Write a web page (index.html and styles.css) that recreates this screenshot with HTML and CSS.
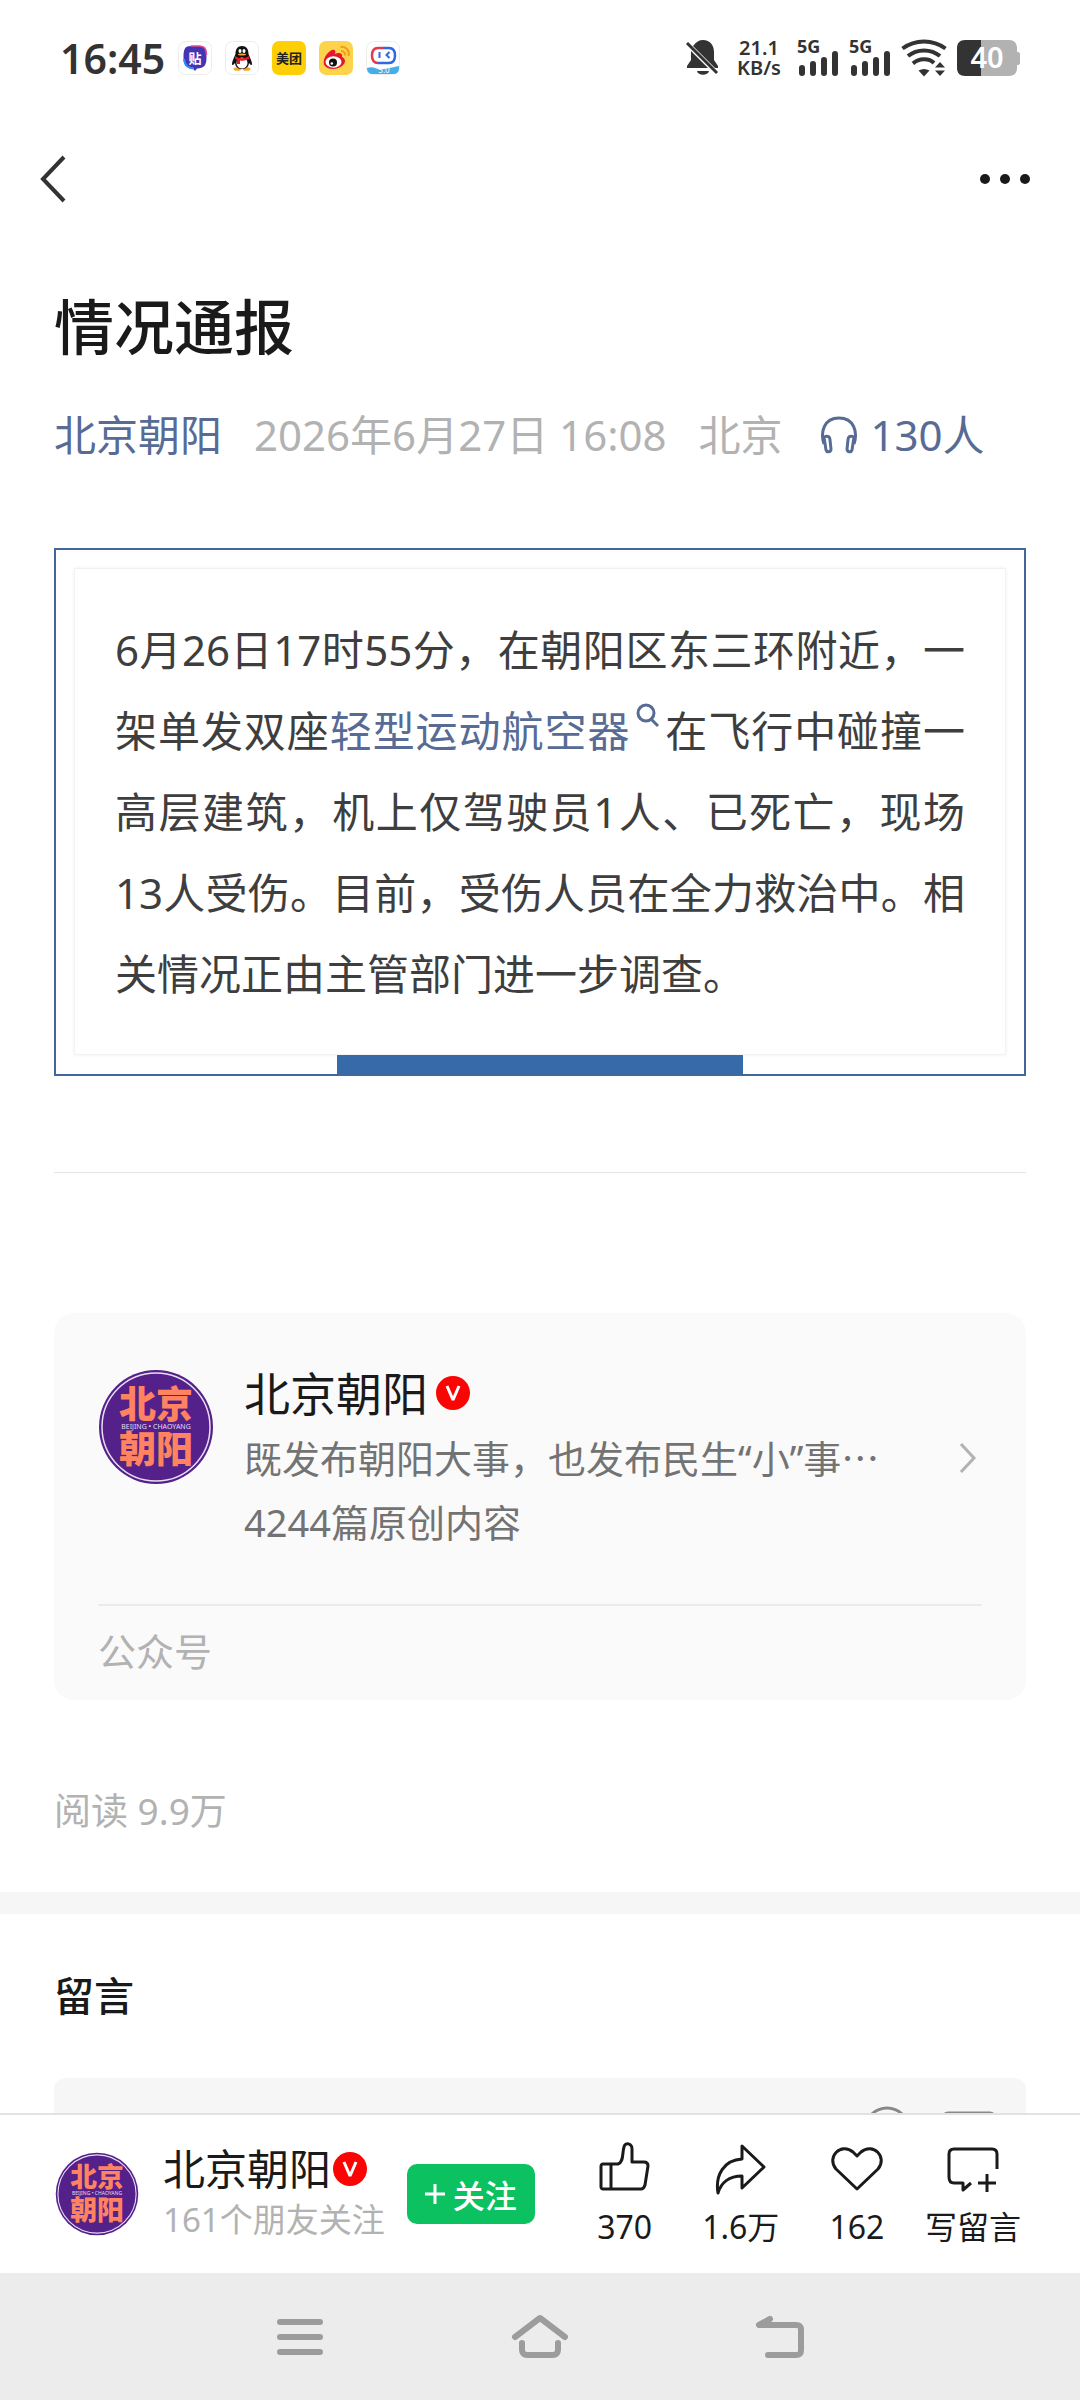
FILE: index.html
```html
<!DOCTYPE html>
<html lang="zh-CN">
<head>
  <meta charset="UTF-8">
  <meta name="viewport" content="width=device-width, initial-scale=1.0">
  <title>情况通报</title>
  <link rel="stylesheet" href="styles.css">
</head>
<body>
  <header class="status-bar">
    <div class="status-left">
      <span class="time">16:45</span>
      <svg class="app" viewBox="0 0 34 34">
        <rect x="0.5" y="0.5" width="33" height="33" rx="7" fill="#fff" stroke="#ececec"/>
        <path d="M13 5H21C27 5 28.5 8 28.5 16C28.5 25 26 27 19 27.5L17 30L15 27.5C8 27 5.5 24 5.5 16C5.5 8 7 5 13 5Z" fill="#4434b4"/>
        <path d="M13 5H21C27 5 28.5 8 28.5 14" fill="none" stroke="#e0508c" stroke-width="1.5"/>
        <path d="M6 18C7 25 10 27 16 27.5" fill="none" stroke="#2f8cf0" stroke-width="2"/>
        <text x="17" y="22" class="app-text white">贴</text>
      </svg>
      <svg class="app" viewBox="0 0 34 34">
        <rect x="0.5" y="0.5" width="33" height="33" rx="7" fill="#fff" stroke="#ececec"/>
        <ellipse cx="12.5" cy="28" rx="4" ry="1.8" fill="#f5a623"/>
        <ellipse cx="21.5" cy="28" rx="4" ry="1.8" fill="#f5a623"/>
        <path d="M17 5C12.5 5 10.5 8 10.5 13C9 17 7 20 7 23C7 25 8.5 24 10 22C10.5 26 13 28 17 28C21 28 23.5 26 24 22C25.5 24 27 25 27 23C27 20 25 17 23.5 13C23.5 8 21.5 5 17 5Z" fill="#111"/>
        <ellipse cx="17" cy="22" rx="5.5" ry="5.5" fill="#fff"/>
        <ellipse cx="15" cy="10" rx="1.5" ry="2" fill="#fff"/>
        <ellipse cx="19" cy="10" rx="1.5" ry="2" fill="#fff"/>
        <ellipse cx="17" cy="13.5" rx="4" ry="1" fill="#f5a623"/>
        <path d="M10 15C14 18 20 18 24 15L24.500 17.500C21 19.500 18 20 15 19.500V23H12V19L10 17.500Z" fill="#e5192c"/>
      </svg>
      <svg class="app" viewBox="0 0 34 34">
        <rect width="34" height="34" rx="7" fill="#ffcf05"/>
        <text x="17" y="22" class="app-text dark">美团</text>
      </svg>
      <svg class="app" viewBox="0 0 34 34">
        <rect width="34" height="34" rx="7" fill="#fcd34a"/>
        <path d="M13 9C16 8 17 10 16 13C20 11 24 12 23 16C27 18 27 22 23 25C18 29 9 29 6 25C2 20 8 11 13 9Z" fill="#e6162d"/>
        <ellipse cx="14.5" cy="21" rx="8" ry="5.8" fill="#fff"/>
        <circle cx="14" cy="21.5" r="4" fill="#111"/>
        <circle cx="12.8" cy="22.5" r="1.3" fill="#fff"/>
        <path d="M21.5 6C27 5 31 10 29.5 15M22 10C25 10 26.5 12 26 14.5" fill="none" stroke="#f59a1b" stroke-width="2"/>
      </svg>
      <svg class="app" viewBox="0 0 34 34">
        <rect x="0.5" y="0.5" width="33" height="33" rx="7" fill="#fff" stroke="#ececec"/>
        <path d="M1 27C8 24 12 30 18 28C24 27 28 26 33 25V27C33 31 31 33 27 33H7C3 33 1 31 1 27Z" fill="#45aee8"/>
        <path d="M17 7H12C8 7 6 10 6 14.500C6 19 8 22 12 22" fill="none" stroke="#e23b4e" stroke-width="2.5"/>
        <path d="M17 7H23C27 7 29 10 29 14.500C29 19 27 22 23 22H12" fill="none" stroke="#3268e0" stroke-width="2.5"/>
        <path d="M13.5 11V17M23.5 11L20.5 14L23.5 17" fill="none" stroke="#3268e0" stroke-width="2"/>
        <text x="18" y="32" class="app-mini">5.0</text>
      </svg>
    </div>
    <div class="status-right">
      <svg class="bell" viewBox="0 0 36 38">
        <path d="M9 6C11 3 14 1 18 1C25 1 29 6 29 13V21L33 27V29H30L8 7Z" fill="#333"/>
        <path d="M6 12V21L2 27V29H23Z" fill="#333"/>
        <path d="M12 32H24C23 37 13 37 12 32Z" fill="#333"/>
        <path d="M2 4L32 34" stroke="#333" stroke-width="3"/>
      </svg>
      <div class="speed"><span>21.1</span><span>KB/s</span></div>
      <svg class="signal" viewBox="0 0 42 38">
        <text x="0" y="14" class="signal-text">5G</text>
        <path d="M5 29V34M16 25V34M27 21V34M38 15V34" stroke="#333" stroke-width="6" stroke-linecap="round"/>
      </svg>
      <svg class="signal" viewBox="0 0 42 38">
        <text x="0" y="14" class="signal-text">5G</text>
        <path d="M5 29V34M16 25V34M27 21V34M38 15V34" stroke="#333" stroke-width="6" stroke-linecap="round"/>
      </svg>
      <svg class="wifi" viewBox="0 0 46 38">
        <g fill="none" stroke="#333" stroke-width="4">
          <path d="M1.5 9.5C14 0 32 0 44.5 9.5"/>
          <path d="M7 17C16 9.500 30 9.500 39 17"/>
          <path d="M12 24.500C18 19 28 19 33 24"/>
        </g>
        <path d="M17.5 31.5C21 29.5 25 29.5 28.5 31.5L23 37.5Z" fill="#333"/>
        <path d="M34 28.5L39 23L44 28.5ZM34 31.5H44L39 37Z" fill="#333"/>
      </svg>
      <svg class="battery" viewBox="0 0 64 38">
        <path d="M24 1H52C57 1 60 4 60 9V13H61C62 13 63 14 63 15V24C63 25 62 26 61 26H60V29C60 34 57 37 52 37H24Z" fill="#b2b2b2"/>
        <path d="M24 1H8C3 1 0 4 0 9V29C0 34 3 37 8 37H24Z" fill="#333"/>
        <text x="30" y="29" class="battery-text">40</text>
      </svg>
    </div>
  </header>

  <nav class="top-nav">
    <button type="button" aria-label="返回">
      <svg width="28" height="48" viewBox="0 0 28 48"><path d="M25 2L4 24L25 46" fill="none" stroke="#333" stroke-width="4"/></svg>
    </button>
    <button type="button" aria-label="更多">
      <svg width="50" height="12" viewBox="0 0 50 12" fill="#1a1a1a"><circle cx="5" cy="6" r="5"/><circle cx="25" cy="6" r="5"/><circle cx="45" cy="6" r="5"/></svg>
    </button>
  </nav>

  <main>
    <article>
      <h1>情况通报</h1>
      <div class="meta">
        <a href="#">北京朝阳</a>
        <span>2026年6月27日 16:08</span>
        <span>北京</span>
        <a href="#" class="listen">
          <svg width="38" height="38" viewBox="0 0 38 38">
            <g fill="none" stroke="#576b95" stroke-width="3">
              <path d="M4 28C0 16 4 2 19 2C34 2 38 16 34 28"/>
              <path d="M4 21C8 19 10 21 10 24L11 33C11 36 7 37 6 34Z"/>
              <path d="M34 21C30 19 28 21 28 24L27 33C27 36 31 37 32 34Z"/>
            </g>
          </svg>
          130人
        </a>
      </div>

      <section class="notice">
        <div class="notice-inner">
          <p>6月26日17时55分，在朝阳区东三环附近，一架单发双座<a href="#">轻型运动航空器<svg class="search" viewBox="0 0 34 34"><circle cx="16" cy="12" r="8" fill="none" stroke="#576b95" stroke-width="3"/><path d="M21 18L28 25" stroke="#576b95" stroke-width="3"/></svg></a>在飞行中碰撞一高层建筑，机上仅驾驶员1人、已死亡，现场13人受伤。目前，受伤人员在全力救治中。相关情况正由主管部门进一步调查。</p>
        </div>
        <div class="notice-bar"></div>
      </section>

      <hr>

      <section class="profile">
        <a href="#" class="profile-main">
          <svg class="profile-avatar" viewBox="0 0 116 116">
            <circle cx="58" cy="58" r="57" fill="#54208a"/>
            <circle cx="58" cy="58" r="54" fill="none" stroke="#e8dcf2" stroke-width="1.5"/>
            <text x="58" y="49" class="logo-cn">北京</text>
            <text x="58" y="60" class="logo-en">BEIJING • CHAOYANG</text>
            <text x="58" y="94" class="logo-cn">朝阳</text>
          </svg>
          <div class="profile-info">
            <h2>北京朝阳<svg class="verified" viewBox="0 0 34 34"><circle cx="17" cy="17" r="17" fill="#fb0404"/><path d="M11 10L17 24L23 10" fill="none" stroke="#fff" stroke-width="3" stroke-linejoin="bevel"/></svg></h2>
            <p>既发布朝阳大事，也发布民生“小”事<span class="dots">…</span></p>
            <p>4244篇原创内容</p>
          </div>
          <svg class="arrow" width="24" height="32" viewBox="0 0 24 32"><path d="M3 2L16 16L3 30" fill="none" stroke="#b2b2b2" stroke-width="3"/></svg>
        </a>
        <div class="profile-type">公众号</div>
      </section>

      <p class="reads">阅读 9.9万</p>
    </article>

    <section class="comments">
      <h3>留言</h3>
      <div class="comment-box">
        <svg width="48" height="48" viewBox="0 0 48 48" fill="none" stroke="#888" stroke-width="3"><circle cx="24" cy="24" r="22"/><path d="M14 28C17 36 31 36 34 28"/></svg>
        <svg width="56" height="48" viewBox="0 0 56 48" fill="none" stroke="#888" stroke-width="3"><rect x="2" y="7" width="52" height="39" rx="5"/><path d="M4 40L20 24L34 40"/></svg>
      </div>
    </section>
  </main>

  <footer class="action-bar">
    <svg class="small-avatar" viewBox="0 0 116 116">
      <circle cx="58" cy="58" r="57" fill="#54208a"/>
      <circle cx="58" cy="58" r="54" fill="none" stroke="#e8dcf2" stroke-width="1.5"/>
      <text x="58" y="49" class="logo-cn">北京</text>
      <text x="58" y="60" class="logo-en">BEIJING • CHAOYANG</text>
      <text x="58" y="94" class="logo-cn">朝阳</text>
    </svg>
    <div class="account">
      <a href="#" class="account-name">北京朝阳<svg class="verified" viewBox="0 0 34 34"><circle cx="17" cy="17" r="17" fill="#fb0404"/><path d="M11 10L17 24L23 10" fill="none" stroke="#fff" stroke-width="3" stroke-linejoin="bevel"/></svg></a>
      <span class="account-sub">161个朋友关注</span>
    </div>
    <button type="button" class="follow"><svg width="20" height="20" viewBox="0 0 20 20"><path d="M10 0V20M0 10H20" stroke="#fff" stroke-width="3"/></svg>关注</button>
    <div class="actions">
      <button type="button">
        <svg viewBox="0 0 54 54"><path d="M13 23H20C26 21 24 12 26 6C27 1 34 2 34 8V21H46C49 21 50 23 50 25L47 44C46 47 45 48 43 48H5C4 48 3 47 3 46V25C3 24 4 23 5 23H13V48"/></svg>
        370
      </button>
      <button type="button">
        <svg viewBox="0 0 54 54"><path d="M28 5L50 26L28 47V35C15 35 7 42 4 52C1 34 10 19 28 18Z"/></svg>
        1.6万
      </button>
      <button type="button">
        <svg viewBox="0 0 54 54"><path d="M27 48L6 28C-4 16 11 1 23 11L27 15L31 11C43 1 58 16 48 28Z"/></svg>
        162
      </button>
      <button type="button">
        <svg viewBox="0 0 54 54"><path d="M51 28V13C51 10 50 8 46 8H8C4 8 3 10 3 13V36C3 40 5 42 8 42H17V49L25 42M32 42H50M41 33V51"/></svg>
        写留言
      </button>
    </div>
  </footer>

  <nav class="system-nav">
    <button type="button" aria-label="菜单"><svg viewBox="0 0 60 50"><path d="M10 10H50M10 25H50M10 40H50" stroke-width="6"/></svg></button>
    <button type="button" aria-label="主页"><svg viewBox="0 0 60 50"><path d="M5 25L30 6L55 25M12 31V38C12 41 14 43 17 43H43C46 43 48 41 48 38V31" stroke-width="6"/></svg></button>
    <button type="button" aria-label="后退"><svg viewBox="0 0 60 50"><path d="M20 7L9 13H46C50 13 51 15 51 18V38C51 41 50 43 46 43H18" stroke-width="6"/></svg></button>
  </nav>
</body>
</html>
```

FILE: styles.css
```css
* {
  box-sizing: border-box;
}
body {
  display: flex;
  flex-direction: column;
  height: 100vh;
  margin: 0;
  background-color: #fff;
  color: #1a1a1a;
  font-family: "Noto Sans", "Noto Sans CJK SC", sans-serif;
}
h1, h2, h3, p {
  margin: 0;
  font-weight: normal;
}
a {
  color: #576b95;
  text-decoration: none;
}
button {
  padding: 0;
  border: none;
  background: none;
  color: inherit;
  font-family: inherit;
  cursor: pointer;
}
svg {
  flex: none;
}

/* status bar */
.status-bar {
  display: flex;
  justify-content: space-between;
  align-items: center;
  flex: none;
  height: 115px;
  padding: 0 59px 0 60px;
  color: #333;
}
.status-left {
  display: flex;
  align-items: center;
  gap: 13px;
}
.time {
  font-size: 41px;
  font-weight: 600;
  line-height: 50px;
}
.app {
  width: 34px;
  height: 34px;
}
.app-text {
  font-size: 13px;
  font-weight: bold;
  text-anchor: middle;
}
.white {
  fill: #fff;
}
.dark {
  fill: #222;
}
.app-mini {
  font-size: 8px;
  fill: #fff;
  text-anchor: middle;
}
.status-right {
  display: flex;
  align-items: center;
  gap: 10px;
}
.bell {
  width: 36px;
  height: 38px;
}
.speed {
  display: flex;
  flex-direction: column;
  width: 46px;
  margin: 0 5px;
  font-size: 20px;
  font-weight: 600;
  line-height: 20px;
  text-align: center;
}
.signal {
  width: 42px;
  height: 38px;
}
.signal-text {
  font-size: 18px;
  font-weight: bold;
  fill: #333;
}
.wifi {
  width: 46px;
  height: 38px;
}
.battery {
  width: 64px;
  height: 38px;
}
.battery-text {
  font-size: 29px;
  font-weight: 600;
  fill: #fff;
  text-anchor: middle;
}

.top-nav {
  display: flex;
  justify-content: space-between;
  align-items: center;
  flex: none;
  height: 128px;
  padding: 0 50px 0 39px;
}
.top-nav svg {
  display: block;
}

/* article */
main {
  flex: 1;
  min-height: 0;
  overflow: hidden;
}
article {
  padding: 42px 54px 56px;
}
h1 {
  font-size: 60px;
  font-weight: 500;
  line-height: 84px;
}
.meta {
  display: flex;
  align-items: center;
  gap: 32px;
  margin-top: 36px;
  color: #b2b2b2;
  font-size: 42px;
  line-height: 60px;
  white-space: nowrap;
}
.listen {
  display: flex;
  align-items: center;
  gap: 12px;
  padding-left: 6px;
}
.notice {
  margin-top: 83px;
  border: 2px solid #41689a;
}
.notice-inner {
  margin: 18px 18px 0;
  padding: 40px;
  border: 1px solid #f2f2f2;
  box-shadow: 0 0 4px rgba(0, 0, 0, 0.06);
  color: #3e3e3e;
}
.notice-inner p {
  font-size: 42px;
  line-height: 81px;
  text-align: justify;
}
.search {
  width: 34px;
  height: 34px;
  vertical-align: 12px;
}
.notice-bar {
  width: 42%;
  height: 19px;
  margin: 0 auto;
  background-color: #366aa8;
}
hr {
  height: 1px;
  margin: 96px 0 140px;
  border: none;
  background-color: #e4e4e4;
}
.profile {
  padding: 48px 44px 0;
  border-radius: 20px;
  background-color: #fafafa;
}
.profile-main {
  display: flex;
  align-items: center;
  gap: 30px;
  padding-bottom: 50px;
  border-bottom: 2px solid #ebebeb;
}
.profile-avatar {
  align-self: flex-start;
  width: 116px;
  height: 116px;
  margin-top: 8px;
}
.profile-info {
  flex: 1;
  min-width: 0;
  color: #737373;
  font-size: 38px;
  line-height: 64px;
  white-space: nowrap;
}
h2 {
  display: flex;
  align-items: center;
  gap: 8px;
  color: #1a1a1a;
  font-size: 46px;
  line-height: 64px;
}
.dots {
  font-family: "Noto Sans CJK SC", sans-serif;
}
.verified {
  width: 34px;
  height: 34px;
}
.profile-type {
  padding-bottom: 4px;
  color: #b2b2b2;
  font-size: 38px;
  line-height: 90px;
}
.reads {
  margin-top: 86px;
  color: #b2b2b2;
  font-size: 37px;
  line-height: 50px;
}
.logo-cn {
  font-family: "Noto Sans CJK SC", sans-serif;
  font-size: 37px;
  font-weight: 900;
  fill: #ff8360;
  text-anchor: middle;
}
.logo-en {
  font-size: 7px;
  fill: #e8dcf2;
  text-anchor: middle;
}

/* comments */
.comments {
  padding: 52px 54px 0;
  border-top: 22px solid #f6f6f6;
}
h3 {
  font-size: 40px;
  font-weight: 500;
  line-height: 60px;
}
.comment-box {
  display: flex;
  justify-content: flex-end;
  gap: 30px;
  height: 110px;
  margin-top: 52px;
  padding: 28px 29px;
  border-radius: 12px;
  background-color: #f6f6f6;
}

/* bottom bars */
.action-bar {
  display: flex;
  align-items: center;
  flex: none;
  height: 160px;
  padding: 0 49px 0 55px;
  border-top: 2px solid #e2e2e2;
  white-space: nowrap;
}
.small-avatar {
  width: 84px;
  height: 84px;
}
.account {
  display: flex;
  flex-direction: column;
  margin-left: 24px;
}
.account-name {
  display: flex;
  align-items: center;
  gap: 2px;
  color: #1a1a1a;
  font-size: 42px;
  line-height: 52px;
}
.account-sub {
  color: #b2b2b2;
  font-size: 33px;
  line-height: 50px;
}
.follow {
  display: flex;
  justify-content: center;
  align-items: center;
  gap: 8px;
  width: 128px;
  height: 60px;
  margin-left: 22px;
  border-radius: 10px;
  background-color: #0cc160;
  color: #fff;
  font-size: 32px;
  font-weight: 500;
}
.actions {
  display: grid;
  grid-template-columns: repeat(4, 1fr);
  flex: 1;
  margin-left: 32px;
}
.actions button {
  display: flex;
  flex-direction: column;
  align-items: center;
  gap: 12px;
  font-size: 32px;
  line-height: 40px;
}
.actions svg {
  width: 54px;
  height: 54px;
  fill: none;
  stroke: #1a1a1a;
  stroke-width: 3;
  stroke-linejoin: round;
}
.system-nav {
  display: grid;
  grid-template-columns: repeat(3, 240px);
  justify-content: center;
  flex: none;
  height: 127px;
  background-color: #ececec;
}
.system-nav button {
  display: flex;
  justify-content: center;
  align-items: center;
}
.system-nav svg {
  width: 60px;
  height: 50px;
  fill: none;
  stroke: #9c9c9c;
  stroke-linecap: round;
  stroke-linejoin: round;
}
```
